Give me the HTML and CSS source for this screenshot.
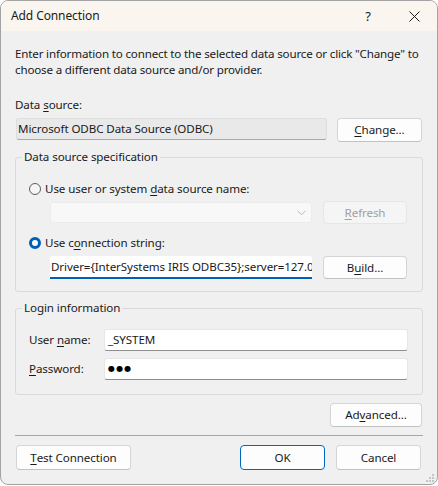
FILE: index.html
```html
<!DOCTYPE html>
<html>
<head>
<meta charset="utf-8">
<title>Add Connection</title>
<link rel="stylesheet" href="styles.css">
</head>
<body>
<div class="window">
  <div class="titlebar">
    <span class="title">Add Connection</span>
    <span class="tb-btn tb-help">?</span>
    <span class="tb-btn tb-close">
      <svg width="11" height="11" viewBox="0 0 11 11"><path d="M0.5 0.5 L10.5 10.5 M10.5 0.5 L0.5 10.5" stroke="#1a1a1a" stroke-width="1" fill="none"/></svg>
    </span>
  </div>
  <div class="content">
    <p class="desc">Enter information to connect to the selected data source or click "Change" to choose a different data source and/or provider.</p>
    <div class="label ds-label">Data <u>s</u>ource:</div>
    <div class="ds-row">
      <div class="field readonly">Microsoft ODBC Data Source (ODBC)</div>
      <button class="btn change-btn"><u>C</u>hange...</button>
    </div>
    <fieldset class="group spec">
      <legend>Data source specification</legend>
      <div class="group-body spec-body">
        <div class="radio-row"><span class="radio"></span><span>Use user or system <u>d</u>ata source name:</span></div>
        <div class="indent-row combo-row">
          <div class="combo">
            <svg class="chev" width="9" height="6" viewBox="0 0 9 6"><path d="M0.5 0.8 L4.5 4.8 L8.5 0.8" stroke="#b4b4b4" stroke-width="1" fill="none"/></svg>
          </div>
          <button class="btn side-btn disabled"><u>R</u>efresh</button>
        </div>
        <div class="radio-row radio2"><span class="radio checked"></span><span>Use c<u>o</u>nnection string:</span></div>
        <div class="indent-row conn-row">
          <div class="field conn"><span class="conn-text">Driver={InterSystems IRIS ODBC35};server=127.0.0</span></div>
          <button class="btn side-btn build-btn">B<u>u</u>ild...</button>
        </div>
      </div>
    </fieldset>
    <fieldset class="group login">
      <legend>Login information</legend>
      <div class="group-body login-body">
        <div class="form-row"><span class="form-label">User <u>n</u>ame:</span><div class="field text">_SYSTEM</div></div>
        <div class="form-row pw-row"><span class="form-label"><u>P</u>assword:</span><div class="field text pw">●●●</div></div>
      </div>
    </fieldset>
    <div class="adv-row"><button class="btn adv-btn">Ad<u>v</u>anced...</button></div>
    <div class="sep"></div>
    <div class="footer">
      <button class="btn test-btn"><u>T</u>est Connection</button>
      <div class="footer-right">
        <button class="btn ok-btn">OK</button>
        <button class="btn cancel-btn">Cancel</button>
      </div>
    </div>
  </div>
  <svg class="grip" width="9" height="9" viewBox="0 0 9 9">
    <rect x="6" y="0" width="2" height="2" fill="#c4c4c4"/>
    <rect x="3" y="3" width="2" height="2" fill="#c4c4c4"/>
    <rect x="6" y="3" width="2" height="2" fill="#c4c4c4"/>
    <rect x="0" y="6" width="2" height="2" fill="#c4c4c4"/>
    <rect x="3" y="6" width="2" height="2" fill="#c4c4c4"/>
    <rect x="6" y="6" width="2" height="2" fill="#c4c4c4"/>
  </svg>
</div>
</body>
</html>
```

FILE: styles.css
```css
html, body {
  margin: 0;
  padding: 0;
  background: #ffffff;
}

body {
  font-family: "Segoe UI", "Noto Sans", "Open Sans", sans-serif;
  font-size: 11.6px;
  letter-spacing: -0.1px;
  line-height: 16px;
  color: #1a1a1a;
}

u {
  text-decoration: underline;
  text-underline-offset: 2px;
}

.window {
  box-sizing: border-box;
  width: 438px;
  height: 485px;
  border: 1px solid #a3a3a3;
  border-radius: 8px;
  background: #f0f0f0;
  overflow: hidden;
  position: relative;
  display: flex;
  flex-direction: column;
}

.titlebar {
  height: 30px;
  flex: none;
  background: #faf5ef;
  display: flex;
  align-items: center;
  padding-left: 10px;
}

.title {
  flex: 1;
  font-size: 12px;
}

.tb-btn {
  width: 46px;
  height: 30px;
  display: flex;
  align-items: center;
  justify-content: center;
}

.tb-help {
  font-size: 13px;
}

.content {
  padding: 15px 14px 0 14px;
  display: flex;
  flex-direction: column;
}

.desc {
  margin: 0;
  letter-spacing: -0.17px;
}

.ds-label {
  margin-top: 19px;
}

.ds-row {
  margin-top: 5px;
  display: flex;
  align-items: flex-start;
}

.field {
  box-sizing: border-box;
  height: 22px;
  display: flex;
  align-items: center;
  white-space: nowrap;
  overflow: hidden;
}

.readonly {
  width: 311px;
  margin-left: 1px;
  padding-left: 1px;
  background: #e9e9e9;
  border: 1px solid #dedede;
  border-bottom-color: #a8a8a8;
  border-radius: 3px;
}

.btn {
  box-sizing: border-box;
  font: inherit;
  letter-spacing: inherit;
  color: #1a1a1a;
  background: #fdfdfd;
  border: 1px solid #d5d5d5;
  border-bottom-color: #c2c2c2;
  border-radius: 4px;
  padding: 0;
  margin: 0;
  display: flex;
  align-items: center;
  justify-content: center;
}

.change-btn {
  margin-left: auto;
  margin-right: 1px;
  width: 85px;
  height: 24px;
}

.group {
  margin: 0;
  padding: 0;
  min-width: 0;
  border: 1px solid #dadada;
  border-radius: 3px;
}

.group legend {
  margin-left: 6px;
  padding: 0 2px;
  line-height: 16px;
}

.spec {
  margin-top: 7px;
}

.group-body {
  display: flex;
  flex-direction: column;
}

.spec-body {
  padding: 16px 15px 12px 13px;
}

.radio-row {
  display: flex;
  align-items: center;
  height: 16px;
}

.radio {
  box-sizing: border-box;
  width: 12px;
  height: 12px;
  border-radius: 50%;
  border: 1px solid #5c5c5c;
  background: #f6f6f6;
  margin-right: 4px;
  flex: none;
}

.radio.checked {
  border: 3.5px solid #005fb8;
  background: #ffffff;
}

.indent-row {
  display: flex;
  align-items: flex-start;
  margin-left: 21px;
}

.combo-row {
  margin-top: 4px;
}

.combo {
  box-sizing: border-box;
  width: 262px;
  height: 21px;
  margin-top: 1px;
  background: #f8f8f8;
  border: 1px solid #ececec;
  border-radius: 3px;
  display: flex;
  align-items: center;
  justify-content: flex-end;
  padding-right: 5px;
}

.side-btn {
  margin-left: 11px;
  width: 84px;
  height: 23px;
}

.btn.disabled {
  background: #f5f5f5;
  border-color: #e6e6e6;
  color: #a0a0a0;
}

.radio2 {
  margin-top: 11px;
}

.conn-row {
  margin-top: 5px;
}

.conn {
  width: 262px;
  flex: none;
  height: 23px;
  padding-left: 1px;
  background: #ffffff;
  border-bottom: 2px solid #005fb8;
  border-radius: 3px 3px 0 0;
  overflow: hidden;
}

.conn-text {
  white-space: nowrap;
}

.login {
  margin-top: 8px;
}

.login-body {
  padding: 13px 14px 14px 13px;
}

.form-row {
  display: flex;
  align-items: center;
}

.pw-row {
  margin-top: 7px;
}

.form-label {
  width: 75px;
  flex: none;
}

.text {
  width: 304px;
  padding-left: 3px;
  background: #ffffff;
  border: 1px solid #e6e6e6;
  border-bottom-color: #8e8e8e;
  border-radius: 3px;
}

.pw {
  font-family: "DejaVu Sans", sans-serif;
  font-size: 8px;
  letter-spacing: 1.2px;
  color: #000;
}

.adv-row {
  margin-top: 8px;
  display: flex;
  justify-content: flex-end;
}

.adv-btn {
  width: 92px;
  height: 24px;
  margin-right: 1px;
}

.sep {
  margin-top: 8px;
  height: 0;
  border-top: 1px solid #a6a6a6;
}

.footer {
  margin-top: 9px;
  display: flex;
  justify-content: space-between;
}

.footer .btn {
  height: 25px;
}

.test-btn {
  width: 115px;
  margin-left: 1px;
}

.footer-right {
  display: flex;
  gap: 11px;
  margin-right: 2px;
}

.ok-btn {
  width: 85px;
  border-color: #0067c0;
}

.cancel-btn {
  width: 85px;
}

.grip {
  position: absolute;
  right: 2px;
  bottom: 1px;
}
```
